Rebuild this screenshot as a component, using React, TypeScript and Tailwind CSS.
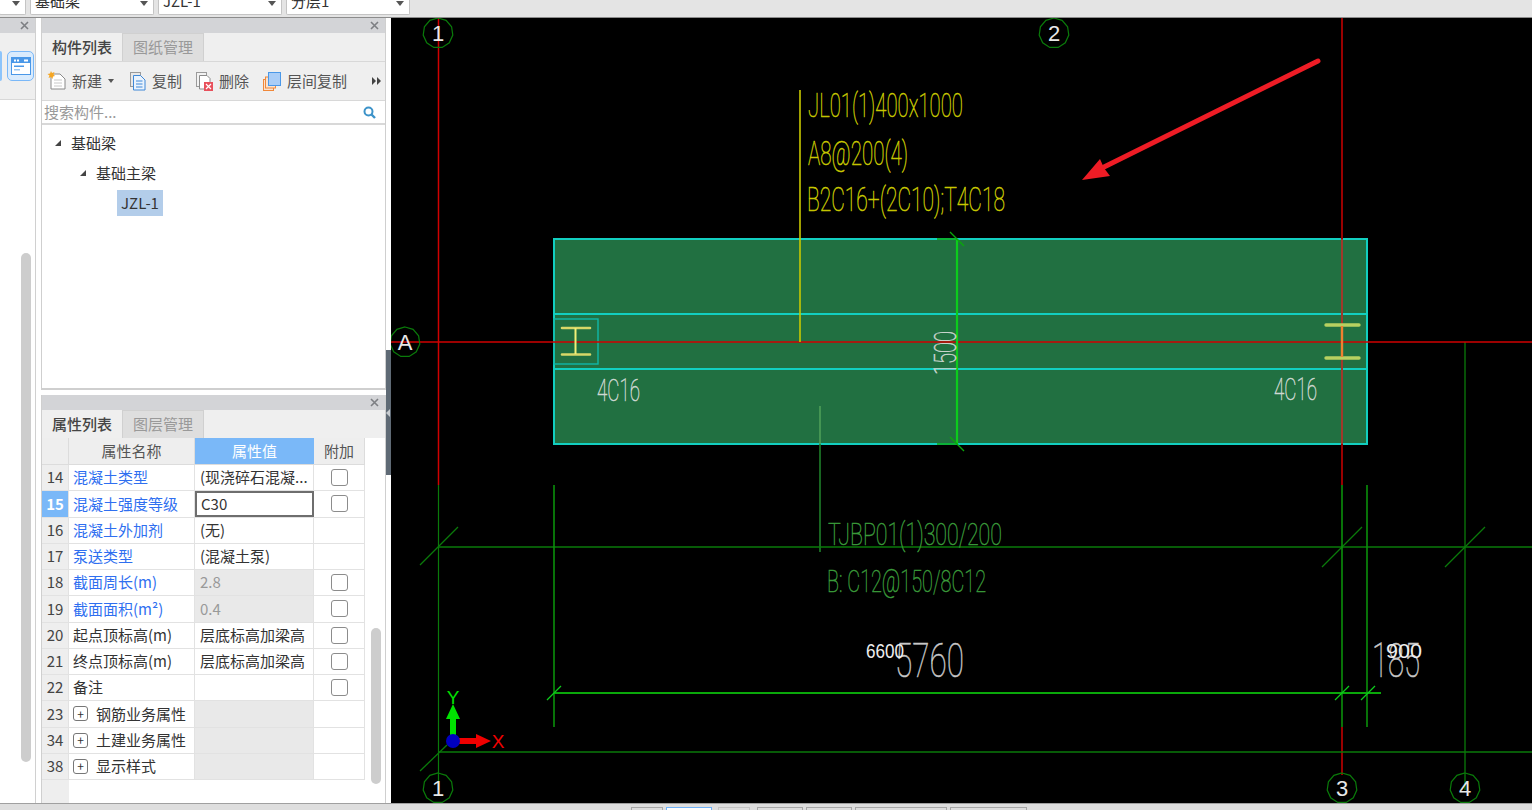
const UI_FONT = { fontFamily: '"Noto Sans CJK SC", "Liberation Sans", sans-serif' };

const rows = [
  { no: 14, name: "混凝土类型", value: "(现浇碎石混凝...", check: true, blue: true },
  { no: 15, name: "混凝土强度等级", value: "C30", check: true, blue: true, active: true },
  { no: 16, name: "混凝土外加剂", value: "(无)", blue: true },
  { no: 17, name: "泵送类型", value: "(混凝土泵)", blue: true },
  { no: 18, name: "截面周长(m)", value: "2.8", check: true, blue: true, gray: true },
  { no: 19, name: "截面面积(m²)", value: "0.4", check: true, blue: true, gray: true },
  { no: 20, name: "起点顶标高(m)", value: "层底标高加梁高", check: true },
  { no: 21, name: "终点顶标高(m)", value: "层底标高加梁高", check: true },
  { no: 22, name: "备注", value: "", check: true },
  { no: 23, name: "钢筋业务属性", value: "", group: true },
  { no: 34, name: "土建业务属性", value: "", group: true },
  { no: 38, name: "显示样式", value: "", group: true },
];

function CloseX() {
  return (
    <svg width="9" height="9" viewBox="0 0 9 9">
      <path d="M1 1 L8 8 M8 1 L1 8" stroke="#7d7f83" strokeWidth="1.6" />
    </svg>
  );
}

function PanelHeader() {
  return (
    <div className="flex h-[15px] shrink-0 items-center justify-end bg-[#d3d4d7] pr-[6px]">
      <CloseX />
    </div>
  );
}

function Tabs({ active, other }: { active: string; other: string }) {
  return (
    <div className="flex h-[28px] shrink-0 bg-[#efefef] text-[15px]">
      <div className="flex w-[80px] items-center justify-center font-medium text-[#444]">{active}</div>
      <div className="flex w-[82px] items-center justify-center border-x border-t border-[#d0d0d0] bg-[#dedede] text-[#999]">{other}</div>
    </div>
  );
}

function Select({ text, width }: { text: string; width: string }) {
  return (
    <div className={`${width} relative h-[15px] overflow-hidden rounded-b-[2px] border-b border-x border-[#c4c4c4] bg-white pl-[4px] text-[15px] text-[#333]`}>
      <div className="-mt-[9px] leading-[20px]">{text}</div>
      <div className="absolute right-[5px] top-[1px] h-0 w-0 border-x-[4px] border-t-[5px] border-x-transparent border-t-[#555]" />
    </div>
  );
}

function TopBar() {
  return (
    <div className="flex h-[18px] shrink-0 gap-[4px] border-b border-[#8c8c8c] bg-[#e4e4e4]">
      <div className="-ml-[1px] w-[27px]">
        <Select text="" width="w-[27px]" />
      </div>
      <Select text="基础梁" width="w-[124px]" />
      <Select text="JZL-1" width="w-[124px]" />
      <Select text="分层1" width="w-[124px]" />
    </div>
  );
}

function LeftStrip() {
  return (
    <div className="flex w-[36px] shrink-0 flex-col border-r border-[#d0d0d0] bg-white">
      <PanelHeader />
      <div className="flex h-[67px] shrink-0 items-center gap-[5px] border-b border-[#d8d8d8] bg-[#efefef]">
        <div className="h-[30px] w-[2px] rounded-r-[3px] bg-[#8cc4fb]" />
        <div className="flex h-[30px] w-[27px] items-center justify-center rounded-[5px] border border-[#7ab8f8] bg-[#d9ebfd]">
          <svg width="20" height="18" viewBox="0 0 20 18">
            <rect x="0.5" y="0.5" width="19" height="17" fill="#fff" stroke="#4a98e8" />
            <rect x="1" y="1" width="18" height="5" fill="#4a98e8" />
            <rect x="3" y="2.5" width="2" height="2" fill="#fff" />
            <rect x="6" y="2.5" width="2" height="2" fill="#fff" />
            <rect x="13" y="2.5" width="4" height="2" fill="#fff" />
            <rect x="3" y="8.5" width="10" height="1.5" fill="#4a98e8" />
            <rect x="3" y="12" width="6" height="1.5" fill="#9cc8f2" />
          </svg>
        </div>
      </div>
      <div className="flex-1 pl-[21px] pt-[153px]">
        <div className="h-[509px] w-[10px] rounded-full bg-[#cdcdcd]" />
      </div>
    </div>
  );
}

function ToolButton({ icon, label, width, caret }: { icon: React.ReactNode; label: string; width: string; caret?: boolean }) {
  return (
    <div className={`${width} flex items-center`}>
      {icon}
      <span className="text-[15px] text-[#555]">{label}</span>
      {caret && <div className="ml-[6px] h-0 w-0 border-x-[3.5px] border-t-[4px] border-x-transparent border-t-[#555]" />}
    </div>
  );
}

function NewIcon() {
  return (
    <svg className="mr-[5px]" width="20" height="20" viewBox="0 0 20 20">
      <path d="M4 3 H13 L18 8 V18 H4 Z" fill="#fff" stroke="#8a8a8a" />
      <path d="M7 9 H15 M7 12 H15 M7 15 H15" stroke="#c8c8c8" />
      <path d="M4 0 L5 2 L7.5 1 L6.5 3.5 L8 5 L6 5.5 L5.5 8 L4 6 L1.5 7 L2.5 4.5 L0.5 3 L3 2.5 Z" fill="#f5a623" />
    </svg>
  );
}

function CopyIcon() {
  return (
    <svg className="mr-[6px]" width="16" height="20" viewBox="0 0 16 20">
      <rect x="0.5" y="1.5" width="10" height="14" fill="#e8e8e8" stroke="#9a9a9a" />
      <path d="M3.5 4.5 H10.5 L15 9 V19 H3.5 Z" fill="#eaf3fd" stroke="#3f88d8" />
      <path d="M6 10 H12.5 M6 13 H12.5 M6 16 H12.5" stroke="#3f88d8" />
    </svg>
  );
}

function DeleteIcon() {
  return (
    <svg className="mr-[6px]" width="17" height="19" viewBox="0 0 17 19">
      <rect x="0.5" y="0.5" width="10" height="14" fill="#f2f2f2" stroke="#9a9a9a" />
      <path d="M3.5 3.5 H11 L14 6.5 V17 H3.5 Z" fill="#fff" stroke="#8a8a8a" />
      <rect x="8" y="10" width="9" height="9" fill="#e8505b" />
      <path d="M10 12 L15 17 M15 12 L10 17" stroke="#fff" strokeWidth="1.2" />
    </svg>
  );
}

function LayerCopyIcon() {
  return (
    <svg className="mr-[6px]" width="18" height="19" viewBox="0 0 18 19">
      <rect x="0.5" y="7.5" width="10" height="11" fill="#fbe3cf" stroke="#f0883a" />
      <rect x="2.5" y="5" width="10" height="11" fill="#fbe3cf" stroke="#f0883a" />
      <rect x="5.5" y="0.5" width="12" height="13" fill="#a9cdf7" stroke="#4a98e8" />
    </svg>
  );
}

function ComponentPanel() {
  return (
    <div className="flex h-[372px] shrink-0 flex-col border-x border-b-2 border-[#cfcfcf] bg-white">
      <PanelHeader />
      <Tabs active="构件列表" other="图纸管理" />
      <div className="flex h-[40px] shrink-0 items-center border-y border-[#d8d8d8] bg-[#efefef] pl-[5px]">
        <ToolButton icon={<NewIcon />} label="新建" width="w-[83px]" caret />
        <ToolButton icon={<CopyIcon />} label="复制" width="w-[66px]" />
        <ToolButton icon={<DeleteIcon />} label="删除" width="w-[67px]" />
        <ToolButton icon={<LayerCopyIcon />} label="层间复制" width="w-[109px]" />
        <svg width="10" height="8" viewBox="0 0 10 8">
          <path d="M0 0 L4 4 L0 8 Z M5 0 L9 4 L5 8 Z" fill="#444" />
        </svg>
      </div>
      <div className="flex h-[24px] shrink-0 items-center justify-between border-b-2 border-[#d8d8d8] pl-[2px] pr-[9px] text-[15px] text-[#999]">
        <span>搜索构件...</span>
        <svg width="13" height="13" viewBox="0 0 13 13">
          <circle cx="5.5" cy="5.5" r="4" fill="none" stroke="#3d93c9" strokeWidth="2" />
          <path d="M8.5 8.5 L12 12" stroke="#3d93c9" strokeWidth="2.4" />
        </svg>
      </div>
      <div className="text-[15px] text-[#333]">
        <div className="flex h-[30px] items-center pl-[13px] pt-[6px]">
          <div className="mr-[10px] h-0 w-0 border-b-[6px] border-l-[6px] border-b-[#444] border-l-transparent" />
          基础梁
        </div>
        <div className="flex h-[30px] items-center pl-[38px] pt-[6px]">
          <div className="mr-[10px] h-0 w-0 border-b-[6px] border-l-[6px] border-b-[#444] border-l-transparent" />
          基础主梁
        </div>
        <div className="pl-[75px] pt-[5px]">
          <div className="flex h-[26px] w-[46px] items-center justify-center bg-[#b3cdea]">JZL-1</div>
        </div>
      </div>
    </div>
  );
}

function Check() {
  return <div className="h-[17px] w-[17px] rounded-[3px] border border-[#8c8c8c] bg-white" />;
}

function PropertyRow({ row }: { row: (typeof rows)[number] }) {
  return (
    <div className="flex h-[26.25px] shrink-0 border-b border-[#e2e2e2] text-[15px]">
      <div className={`flex w-[27px] shrink-0 items-center justify-center border-r border-[#e2e2e2] ${row.active ? "bg-[#7ab8f8] font-bold text-white" : "bg-[#eeeeee] text-[#444]"}`}>
        {row.no}
      </div>
      <div className={`flex w-[126px] shrink-0 items-center border-r border-[#e2e2e2] pl-[4px] ${row.blue ? "text-[#2f6ff0]" : "text-[#333]"}`}>
        {row.group && (
          <span className="mr-[8px] flex h-[15px] w-[15px] items-center justify-center rounded-[3px] border border-[#777] text-[12px] leading-none">+</span>
        )}
        {row.name}
      </div>
      <div
        className={`flex w-[119px] shrink-0 items-center whitespace-nowrap ${
          row.active ? "border-2 border-[#6e6e6e] pl-[4px]" : "border-r border-[#e2e2e2] pl-[5px]"
        } ${row.gray || row.group ? "bg-[#e9e9e9] text-[#999]" : "text-[#333]"}`}
      >
        {row.value}
      </div>
      <div className="flex w-[51px] shrink-0 items-center justify-center border-r border-[#e2e2e2]">{row.check && <Check />}</div>
    </div>
  );
}

function PropertyPanel() {
  return (
    <div className="flex min-h-0 flex-1 flex-col border-x border-[#cfcfcf] bg-white">
      <PanelHeader />
      <Tabs active="属性列表" other="图层管理" />
      <div className="flex min-h-0 flex-1">
        <div className="flex w-[323px] shrink-0 flex-col">
          <div className="flex h-[27px] shrink-0 border-b border-[#dcdcdc] text-[15px]">
            <div className="w-[27px] border-r border-[#dcdcdc] bg-[#eeeeee]" />
            <div className="flex w-[126px] items-center justify-center border-r border-[#dcdcdc] bg-[#eeeeee] text-[#555]">属性名称</div>
            <div className="flex w-[119px] items-center justify-center bg-[#7ab8f8] text-white">属性值</div>
            <div className="flex w-[51px] items-center justify-center border-r border-[#dcdcdc] bg-[#eeeeee] text-[#555]">附加</div>
          </div>
          {rows.map((r) => (
            <PropertyRow key={r.no} row={r} />
          ))}
          <div className="w-[27px] flex-1 bg-[#eeeeee]" />
        </div>
        <div className="pl-[6px] pt-[190px]">
          <div className="h-[156px] w-[10px] rounded-full bg-[#cdcdcd]" />
        </div>
      </div>
    </div>
  );
}

function Splitter() {
  return (
    <div className="flex w-[5px] shrink-0 flex-col bg-white pt-[332px]">
      <div className="flex h-[125px] w-[5px] items-center bg-[#5f6a75]">
        <div className="h-0 w-0 border-y-[4px] border-r-[4px] border-y-transparent border-r-[#c8ccd0]" />
      </div>
    </div>
  );
}

function polygon(cx: number, cy: number, r: number, n = 11) {
  const pts: string[] = [];
  for (let i = 0; i < n; i++) {
    const a = (i / n) * Math.PI * 2 - Math.PI / 2;
    pts.push(`${(cx + r * Math.cos(a)).toFixed(1)},${(cy + r * Math.sin(a)).toFixed(1)}`);
  }
  return pts.join(" ");
}

const THIN = { fontFamily: "Roboto, 'Liberation Sans', sans-serif", fontWeight: 100 };

function CadText({ x, y, w, size, fill, children }: { x: number; y: number; w: number; size: number; fill: string; children: string }) {
  return (
    <text x={x} y={y} fontSize={size} fill={fill} stroke={fill} strokeWidth={0.55} textLength={w} lengthAdjust="spacingAndGlyphs" style={THIN}>
      {children}
    </text>
  );
}

function AxisMark({ cx, cy, label }: { cx: number; cy: number; label: string }) {
  return (
    <g>
      <polygon points={polygon(cx, cy, 15)} fill="none" stroke="#0a7a0a" strokeWidth="1.2" />
      <text x={cx} y={cy + 8} textAnchor="middle" fontSize={22} fill="#e8e8e8" style={{ fontFamily: "'Liberation Sans', sans-serif" }}>
        {label}
      </text>
    </g>
  );
}

function Canvas() {
  return (
    <div className="min-w-0 flex-1 bg-black">
      <svg className="block" width="1141" height="785" viewBox="391 18 1141 785">
        {/* 基础梁 */}
        <rect x="554" y="239" width="813" height="205" fill="#217041" stroke="#12cfc0" strokeWidth="2" />
        <path d="M554 314 H1367 M554 369 H1367" stroke="#12cfc0" strokeWidth="2" />
        <rect x="554" y="319" width="44" height="45" fill="none" stroke="#10b8a8" strokeWidth="1.4" />

        {/* 轴线 */}
        <path d="M438.5 18 V485" stroke="#d00000" strokeWidth="1.5" />
        <path d="M438.5 485 V790" stroke="#0a7a0a" strokeWidth="1.2" />
        <path d="M1342 18 V239 M1342 444 V485 M1342 727 V775" stroke="#9a0000" strokeWidth="2" />
        <path d="M1342 239 V444" stroke="#a0392a" strokeWidth="2" />
        <path d="M1465 342 V790" stroke="#0a7a0a" strokeWidth="1.3" />
        <path d="M391 342 H1532" stroke="#d00000" strokeWidth="1.4" />

        {/* 工字钢 */}
        <path d="M562 328 H590 M562 354.5 H590" stroke="#d8d868" strokeWidth="2.6" strokeLinecap="round" />
        <path d="M575.5 328 V354" stroke="#f0f078" strokeWidth="2" />
        <path d="M1326 325 H1359 M1326 358 H1359" stroke="#b8d060" strokeWidth="3.4" strokeLinecap="round" />
        <path d="M1342 326 V357" stroke="#f08030" strokeWidth="2.4" />

        {/* 标注线 */}
        <path d="M800 90 V342" stroke="#c8c800" strokeWidth="1.6" />
        <path d="M820 406 V444" stroke="#4f9f58" strokeWidth="1.6" />
        <path d="M820 444 V552" stroke="#1f7f2a" strokeWidth="1.6" />
        <path d="M957 239 V444" stroke="#0ccc1c" strokeWidth="2.2" />
        <path d="M937 239 H957 M937 444 H957" stroke="#0aa80a" strokeWidth="1.6" />
        <path d="M950 232 L964 246 M950 437 L964 451" stroke="#0aa80a" strokeWidth="1.4" />

        {/* 尺寸线 */}
        <path d="M438 547 H1532" stroke="#0a7a0a" strokeWidth="1.4" />
        <path d="M420 565 L458 527 M1322 567 L1362 527 M1445 567 L1485 527" stroke="#0a7a0a" strokeWidth="1.3" />
        <path d="M554 485 V727 M1342 485 V727 M1367 485 V727" stroke="#0a8f0a" strokeWidth="1.6" />
        <path d="M438 752 H1532" stroke="#0a7a0a" strokeWidth="1.4" />
        <path d="M420 771 L447 745" stroke="#0a7a0a" strokeWidth="1.3" />
        <path d="M554 693 H1381" stroke="#0aa80a" strokeWidth="2" />
        <path d="M547 700 L561 686 M1335 700 L1349 686 M1361 700 L1375 686" stroke="#0ccc1c" strokeWidth="1.3" />

        {/* 轴号 */}
        <AxisMark cx={438} cy={33} label="1" />
        <AxisMark cx={1054} cy={33} label="2" />
        <AxisMark cx={405} cy={342} label="A" />
        <AxisMark cx={438} cy={788} label="1" />
        <AxisMark cx={1342} cy={788} label="3" />
        <AxisMark cx={1465} cy={788} label="4" />

        {/* 平法标注 */}
        <CadText x={808} y={117} w={155} size={33} fill="#c8c800">JL01(1)400x1000</CadText>
        <CadText x={808} y={165} w={100} size={33} fill="#c8c800">A8@200(4)</CadText>
        <CadText x={807} y={211} w={198} size={33} fill="#c8c800">B2C16+(2C10);T4C18</CadText>
        <CadText x={597} y={401} w={43} size={32} fill="#cfd8d2">4C16</CadText>
        <CadText x={1274} y={400} w={43} size={32} fill="#cfd8d2">4C16</CadText>
        <g transform="translate(956 375) rotate(-90)">
          <CadText x={0} y={0} w={44} size={32} fill="#c8d4cc">1500</CadText>
        </g>
        <CadText x={828} y={545} w={174} size={32} fill="#3a9a3a">TJBP01(1)300/200</CadText>
        <CadText x={827} y={592} w={159} size={32} fill="#3a9a3a">B: C12@150/8C12</CadText>
        <CadText x={895} y={677} w={69} size={48} fill="#c8c8c8">5760</CadText>
        <CadText x={1372} y={677} w={48} size={48} fill="#c8c8c8">185</CadText>
        <text x={866} y={658} fontSize={21} fill="#eeeeee" textLength={38} lengthAdjust="spacingAndGlyphs" style={{ fontFamily: "'Liberation Sans', sans-serif" }}>6600</text>
        <text x={1386} y={658} fontSize={21} fill="#eeeeee" textLength={36} lengthAdjust="spacingAndGlyphs" style={{ fontFamily: "'Liberation Sans', sans-serif" }}>900</text>

        {/* 红色箭头 */}
        <path d="M1318 61 L1102 168" stroke="#ee1c25" strokeWidth="5" strokeLinecap="round" />
        <path d="M1082 180 L1100 159 L1104 168 L1110 176 Z" fill="#ee1c25" />

        {/* 坐标系 */}
        <path d="M453 741 V718" stroke="#00e000" strokeWidth="6" />
        <path d="M453 704 L460 719 H446 Z" fill="#00e000" />
        <path d="M453 741 H477" stroke="#f00000" strokeWidth="6" />
        <path d="M491 741 L476 734 V748 Z" fill="#f00000" />
        <circle cx="453" cy="741" r="7" fill="#0000c0" />
        <text x={453} y={704} textAnchor="middle" fontSize={19} fill="#00e000" style={{ fontFamily: "'Liberation Sans', sans-serif" }}>Y</text>
        <text x={498} y={748} textAnchor="middle" fontSize={19} fill="#f00000" style={{ fontFamily: "'Liberation Sans', sans-serif" }}>X</text>
      </svg>
    </div>
  );
}

function BottomBar() {
  const buttons = [
    { cls: "ml-[631px] w-[32px] border-[#a8a8a8]" },
    { cls: "ml-[3px] w-[46px] border-[#6fb2f8] bg-white" },
    { cls: "ml-[6px] w-[32px] border-[#c4c4c4]" },
    { cls: "ml-[7px] w-[46px] border-[#a8a8a8]" },
    { cls: "ml-[3px] w-[46px] border-[#a8a8a8]" },
    { cls: "ml-[3px] w-[92px] border-[#a8a8a8]" },
    { cls: "ml-[3px] w-[77px] border-[#a8a8a8]" },
  ];
  return (
    <div className="flex h-[7px] shrink-0 overflow-hidden border-t border-[#a0a0a0] bg-[#dedede] pt-[3px]">
      {buttons.map((b, i) => (
        <div key={i} className={`${b.cls} h-[8px] shrink-0 border`} />
      ))}
    </div>
  );
}

export default function App() {
  return (
    <div className="flex h-[810px] w-[1532px] flex-col overflow-hidden bg-white" style={UI_FONT}>
      <TopBar />
      <div className="flex min-h-0 flex-1">
        <LeftStrip />
        <div className="w-[5px] shrink-0 bg-white" />
        <div className="flex w-[345px] shrink-0 flex-col gap-[5px]">
          <ComponentPanel />
          <PropertyPanel />
        </div>
        <Splitter />
        <Canvas />
      </div>
      <BottomBar />
    </div>
  );
}
